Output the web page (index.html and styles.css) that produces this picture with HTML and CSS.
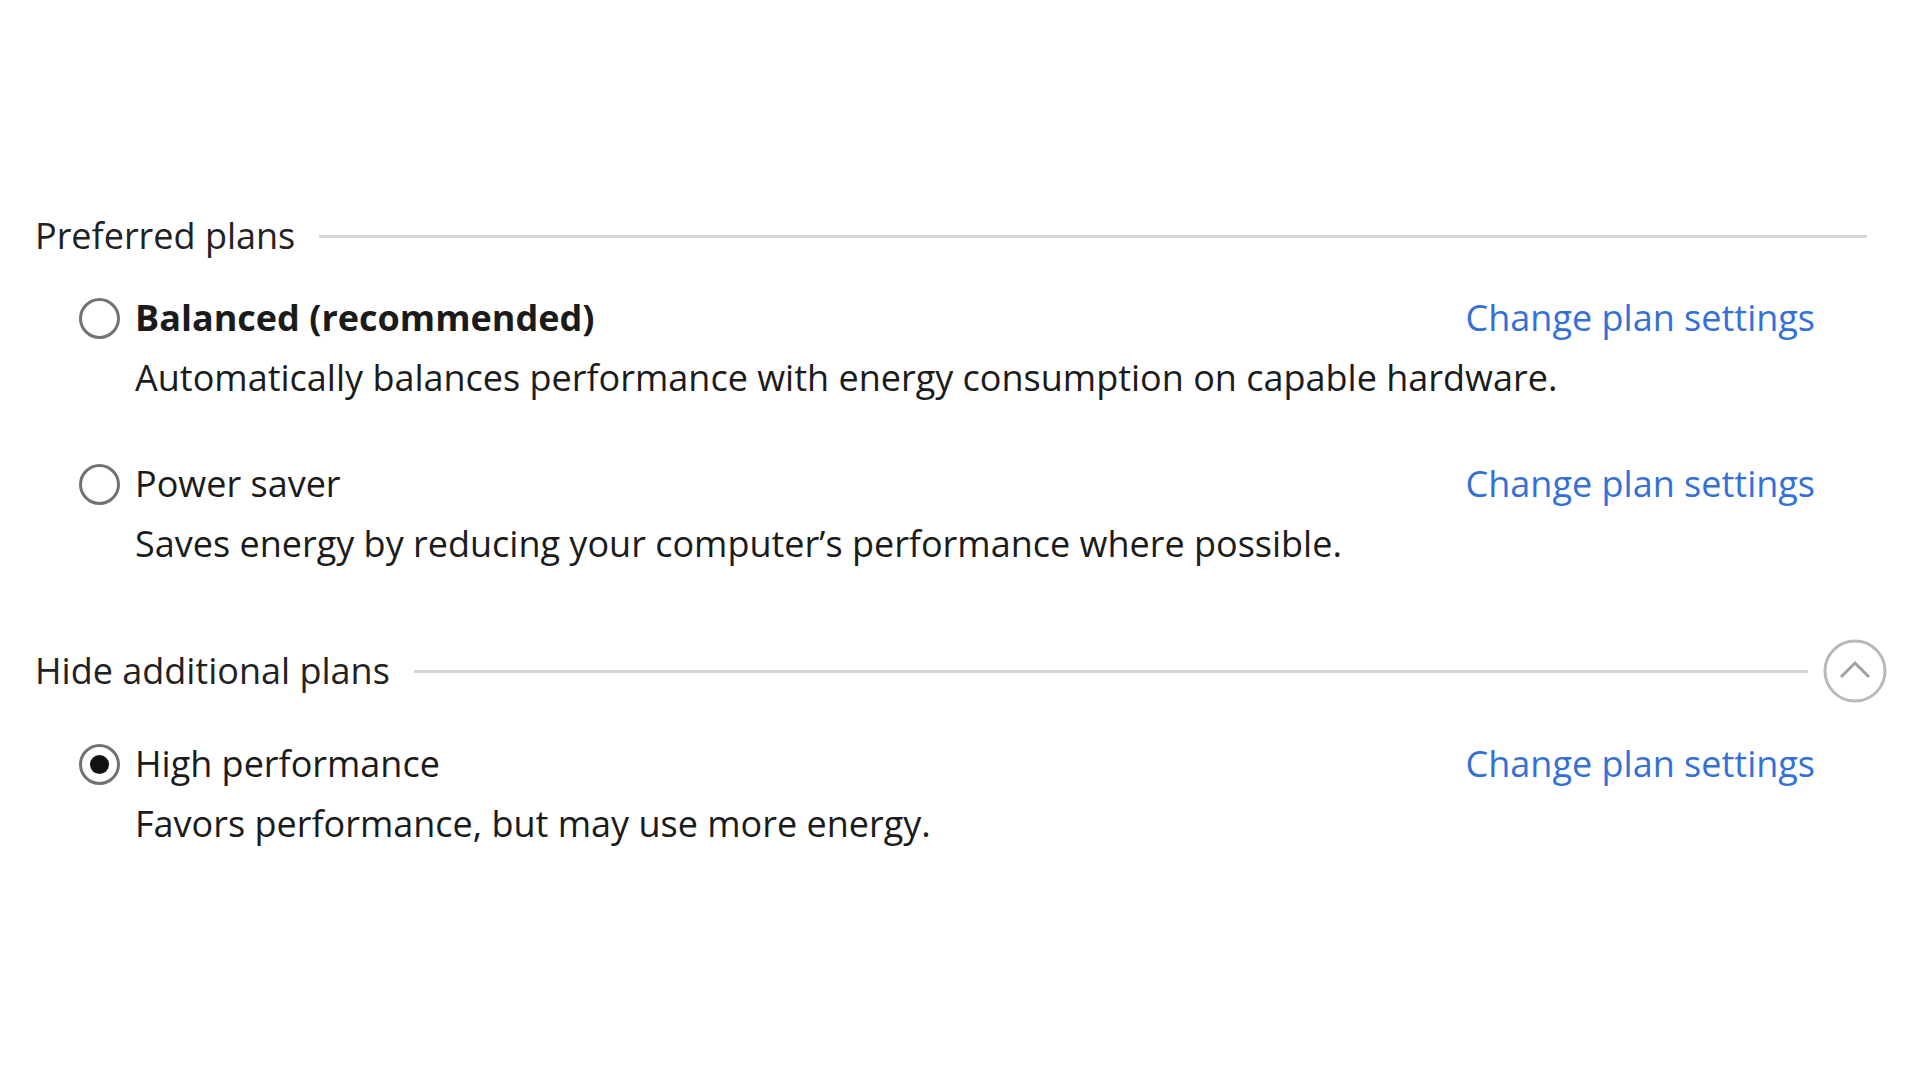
FILE: index.html
```html
<!DOCTYPE html>
<html lang="en">
<head>
<meta charset="utf-8">
<title>Power Options</title>
<link rel="stylesheet" href="styles.css">
</head>
<body>
<div class="page">
  <section class="group group-preferred">
    <div class="group-head">
      <span class="group-title">Preferred plans</span>
      <span class="rule"></span>
    </div>
    <div class="plans">
      <div class="plan">
        <div class="plan-row">
          <span class="radio"></span>
          <span class="plan-name plan-name-bold">Balanced (recommended)</span>
          <a class="plan-link" href="#">Change plan settings</a>
        </div>
        <div class="plan-desc">Automatically balances performance with energy consumption on capable hardware.</div>
      </div>
      <div class="plan">
        <div class="plan-row">
          <span class="radio"></span>
          <span class="plan-name">Power saver</span>
          <a class="plan-link" href="#">Change plan settings</a>
        </div>
        <div class="plan-desc">Saves energy by reducing your computer’s performance where possible.</div>
      </div>
    </div>
  </section>
  <section class="group group-additional">
    <div class="group-head">
      <span class="group-title">Hide additional plans</span>
      <span class="rule"></span>
      <button class="toggle" type="button" aria-label="Hide additional plans">
        <svg viewBox="0 0 64 64" width="64" height="64"><circle cx="32" cy="32" r="30" fill="none" stroke="#b9b9b9" stroke-width="3"/><path d="M18 38 L32 24 L46 38" fill="none" stroke="#a0a0a0" stroke-width="3"/></svg>
      </button>
    </div>
    <div class="plans">
      <div class="plan">
        <div class="plan-row">
          <span class="radio radio-checked"></span>
          <span class="plan-name">High performance</span>
          <a class="plan-link" href="#">Change plan settings</a>
        </div>
        <div class="plan-desc">Favors performance, but may use more energy.</div>
      </div>
    </div>
  </section>
</div>
</body>
</html>
```
FILE: styles.css
```css
html, body {
  margin: 0;
  background: #ffffff;
}
body {
  font-family: "Open Sans", "Noto Sans", sans-serif;
  color: #1b1b1b;
  font-size: 36px;
}
.page {
  width: 1852px;
  padding: 211px 0 0 35px;
}
.group-head {
  display: flex;
  align-items: center;
  height: 50px;
}
.group-title {
  line-height: 50px;
  white-space: nowrap;
  color: #222222;
}
.rule {
  flex: 1;
  height: 3px;
  background: #d6d6d6;
  margin-left: 24px;
}
.group-preferred .group-head {
  margin-right: 20px;
}
.group-preferred .plans {
  margin-top: 32px;
}
.group-additional {
  margin-top: 77px;
}
.group-additional .plans {
  margin-top: 43px;
}
.toggle {
  width: 64px;
  height: 64px;
  margin-left: 15px;
  padding: 0;
  border: 0;
  background: none;
  display: flex;
}
.plan + .plan {
  margin-top: 56px;
}
.plan-row {
  display: flex;
  align-items: center;
  height: 50px;
  padding-left: 44px;
  margin-right: 72px;
}
.radio {
  width: 41px;
  height: 41px;
  box-sizing: border-box;
  border: 3px solid #727272;
  border-radius: 50%;
  display: flex;
  align-items: center;
  justify-content: center;
  flex: none;
}
.radio-checked::after {
  content: "";
  width: 19px;
  height: 19px;
  border-radius: 50%;
  background: #111;
}
.plan-name {
  margin-left: 15px;
  flex: 1;
  line-height: 50px;
}
.plan-name-bold {
  font-weight: 700;
}
.plan-link {
  color: #3470d8;
  text-decoration: none;
  line-height: 50px;
}
.plan-desc {
  margin-top: 10px;
  padding-left: 100px;
  line-height: 50px;
}
```
